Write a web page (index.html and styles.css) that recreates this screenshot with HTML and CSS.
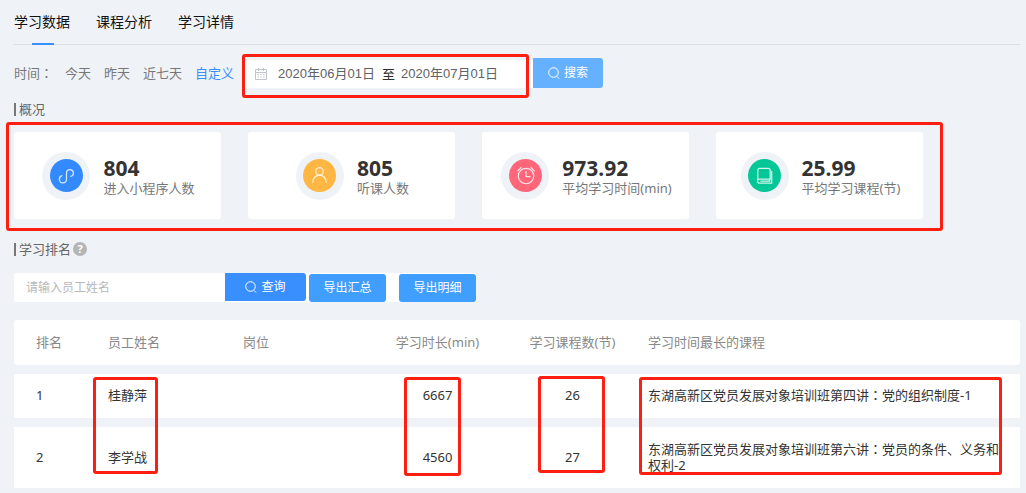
FILE: index.html
```
<!DOCTYPE html>
<html lang="zh-CN">
<head>
<meta charset="utf-8">
<title>学习数据</title>
<link rel="stylesheet" href="styles.css">
</head>
<body>
<nav class="tabs">
  <a class="tab tab-active" href="#data">学习数据</a>
  <a class="tab" href="#course">课程分析</a>
  <a class="tab" href="#detail">学习详情</a>
</nav>

<form class="filter">
  <span class="filter-label">时间<span class="colon" lang="zh-TW">：</span></span>
  <div class="ranges">
    <a class="range" href="#today">今天</a>
    <a class="range" href="#yesterday">昨天</a>
    <a class="range" href="#week">近七天</a>
    <a class="range range-active" href="#custom">自定义</a>
  </div>
  <div class="picker">
    <svg class="calendar" viewBox="0 0 12 12" fill="none" stroke="#c0c4cc"><path d="M.5 1.500h11v10H.5zM.5 4.500h11M3.500 0v3M8.500 0v3M2.500 6.500h1.500M5.200 6.500h1.500M8 6.500h1.500M2.500 9h1.500M5.200 9h1.500M8 9h1.500"/></svg>
    <input class="date" type="text" aria-label="开始日期" value="2020年06月01日">
    <span class="to">至</span>
    <input class="date" type="text" aria-label="结束日期" value="2020年07月01日">
    <span class="mark mark-date"></span>
  </div>
  <button class="btn btn-search" type="button">
    <svg class="lens" viewBox="0 0 12 12" fill="none" stroke="currentColor"><circle cx="5.500" cy="5.500" r="4.800"/><path d="M9 9.500l2 2"/></svg>搜索
  </button>
</form>

<h2 class="title">概况</h2>
<section class="stats">
  <article class="card">
    <span class="badge"><svg class="disc blue" viewBox="0 0 32 32"><path d="M11.500 16.200c-3.500 1.200-3.200 7 1 7 2.200 0 3.500-1.500 3.500-3.700v-6c0-2 1.400-3.300 3.300-3.300 4.200 0 4.600 5.800.9 6.600"/></svg></span>
    <div><strong class="num">804</strong><span class="cap">进入小程序人数</span></div>
  </article>
  <article class="card">
    <span class="badge"><svg class="disc orange" viewBox="0 0 32 32"><circle cx="16" cy="12" r="3.600"/><path d="M9.500 22.500c.3-9 12.700-9 13 0"/></svg></span>
    <div><strong class="num">805</strong><span class="cap">听课人数</span></div>
  </article>
  <article class="card">
    <span class="badge"><svg class="disc red" viewBox="0 0 32 32"><circle cx="16.500" cy="16.500" r="7.500"/><path d="M16.500 12v5h4M8.500 11.500l3-3M24.500 11.500l-3-3"/></svg></span>
    <div><strong class="num">973.92</strong><span class="cap">平均学习时间(min)</span></div>
  </article>
  <article class="card">
    <span class="badge"><svg class="disc green" viewBox="0 0 32 32"><path d="M21.500 19.500h-10c-3 0-3 4 0 4h11.500V12M9.500 21v-10c0-1.200.8-2 2-2h8c1.200 0 2 .8 2 2v8.500M12.500 21.500h8.500v-2"/></svg></span>
    <div><strong class="num">25.99</strong><span class="cap">平均学习课程(节)</span></div>
  </article>
  <span class="mark mark-stats"></span>
</section>

<h2 class="title">学习排名<span class="help">?</span></h2>
<form class="query">
  <input class="name" type="text" aria-label="员工姓名" placeholder="请输入员工姓名">
  <button class="btn btn-query" type="button">
    <svg class="lens" viewBox="0 0 12 12" fill="none" stroke="currentColor"><circle cx="5.500" cy="5.500" r="4.800"/><path d="M9 9.500l2 2"/></svg>查询
  </button>
  <button class="btn btn-export" type="button">导出汇总</button>
  <button class="btn btn-export btn-last" type="button">导出明细</button>
</form>

<div class="ranking">
  <table class="table">
    <colgroup><col class="c-rank"><col class="c-name"><col class="c-post"><col class="c-count"><col class="c-count"><col></colgroup>
    <thead>
      <tr><th>排名</th><th>员工姓名</th><th>岗位</th><th class="mid">学习时长(min)</th><th class="mid">学习课程数(节)</th><th class="course">学习时间最长的课程</th></tr>
    </thead>
    <tbody>
      <tr><td>1</td><td>桂静萍</td><td></td><td class="mid">6667</td><td class="mid">26</td><td class="course">东湖高新区党员发展对象培训班第四讲<span class="colon" lang="zh-TW">：</span>党的组织制度-1</td></tr>
      <tr><td>2</td><td>李学战</td><td></td><td class="mid">4560</td><td class="mid">27</td><td class="course">东湖高新区党员发展对象培训班第六讲<span class="colon" lang="zh-TW">：</span>党员的条件、义务和权利-2</td></tr>
    </tbody>
  </table>
  <span class="mark mark-name"></span>
  <span class="mark mark-time"></span>
  <span class="mark mark-count"></span>
  <span class="mark mark-course"></span>
</div>
</body>
</html>
```
FILE: styles.css
```
* { box-sizing: border-box; }
body {
  margin: 0;
  padding: 0 6px 0 14px;
  background: #eff3f8;
  color: #333;
  font: 13px/16px "Noto Sans", "Noto Sans CJK SC", sans-serif;
}
a { color: inherit; text-decoration: none; }
input, button { font: inherit; border: 0; margin: 0; }
.colon { font-family: "Noto Sans CJK TC", sans-serif; line-height: 1; }

.tabs {
  display: flex;
  gap: 26px;
  height: 45px;
  border-bottom: 1px solid #dcdee2;
  color: #111;
  font-size: 14px;
  line-height: 44px;
}
.tab-active { position: relative; }
.tab-active::after {
  content: "";
  position: absolute;
  left: 18px;
  bottom: -1px;
  width: 22px;
  height: 2px;
  background: #3a8ffe;
}

.filter {
  display: flex;
  align-items: center;
  height: 30px;
  margin-top: 13px;
  color: #777;
}
.filter-label { margin-right: 12px; }
.ranges { display: flex; gap: 13px; }
.range-active { color: #3a8ffe; }
.picker {
  position: relative;
  display: flex;
  align-items: center;
  align-self: flex-end;
  width: 290px;
  height: 28px;
  margin-left: 9px;
  padding-left: 12px;
  background: #fff;
}
.calendar { width: 12px; height: 12px; margin-right: 11px; }
.date {
  width: 104px;
  padding: 0;
  background: none;
  color: #606266;
  font-family: "Liberation Sans", "Noto Sans CJK SC", sans-serif;
}
.to { width: 19px; color: #303133; }

.btn {
  display: flex;
  align-items: center;
  justify-content: center;
  height: 28px;
  padding: 0;
  border-radius: 3px;
  background: #409eff;
  color: #fff;
  font-size: 12px;
}
.lens { width: 12px; height: 12px; margin-right: 4px; }
.btn-search {
  width: 70px;
  height: 30px;
  border-radius: 0 3px 3px 0;
  background: #66b1ff;
}

.title {
  display: flex;
  align-items: center;
  height: 16px;
  margin: 13px 0 15px;
  color: #666;
  font-size: 13px;
  font-weight: 400;
}
.title::before {
  content: "";
  width: 2px;
  height: 13px;
  margin-right: 3px;
  background: #777;
}
.help {
  width: 14px;
  height: 14px;
  margin-left: 2px;
  border-radius: 50%;
  background: #b5b5b5;
  color: #fff;
  font-size: 11px;
  font-weight: 700;
  line-height: 14px;
  text-align: center;
}

.stats {
  position: relative;
  display: grid;
  grid-template-columns: repeat(4, 1fr);
  gap: 27px;
  margin-right: 97px;
  margin-bottom: 22px;
}
.card {
  display: flex;
  align-items: center;
  justify-content: center;
  gap: 13px;
  height: 87px;
  padding-left: 2px;
  border-radius: 3px;
  background: #fff;
}
.badge {
  display: grid;
  place-items: center;
  width: 48px;
  height: 48px;
  border-radius: 50%;
  background: #eff3f8;
}
.disc {
  width: 33px;
  height: 33px;
  border-radius: 50%;
  fill: none;
  stroke: #fff;
  stroke-opacity: .8;
  stroke-width: 1.2;
  stroke-linecap: round;
}
.blue { background: #338aff; }
.orange { background: #ffb643; }
.red { background: #ff667a; }
.green { background: #04c797; }
.num { display: block; font-size: 21px; line-height: 24px; }
.cap { display: block; color: #777; }

.query {
  display: flex;
  align-items: flex-start;
  width: fit-content;
  margin: 16px 0 18px;
  border-radius: 3px;
  background: #fff;
}
.name {
  width: 211px;
  height: 29px;
  padding: 0 12px;
  border-radius: 3px 0 0 3px;
  background: #fff;
  font-size: 12px;
}
.name::placeholder { color: #b8b8b8; }
.btn-query {
  width: 81px;
  margin-right: 3px;
  border-radius: 0 3px 3px 0;
  background: #3a8ffe;
}
.btn-export { width: 77px; margin-top: 1px; }
.btn-last { margin-left: 13px; }

.ranking { position: relative; display: flow-root; }
.table {
  width: 100%;
  table-layout: fixed;
  border-spacing: 0 9px;
  margin: -9px 0;
}
.c-rank { width: 72px; }
.c-name { width: 135px; }
.c-post { width: 149px; }
.c-count { width: 135px; }
th, td {
  height: 44px;
  padding: 0 0 2px 22px;
  background: #fff;
  text-align: left;
}
th { height: 45px; color: #888; font-weight: 400; }
th:first-child { border-radius: 3px 0 0 3px; }
th:last-child { border-radius: 0 3px 3px 0; }
tbody tr:last-child td { height: 61px; }
.table .mid { padding: 0 0 2px; text-align: center; }
.table .course { padding: 0 14px 2px 8px; }

.mark {
  position: absolute;
  border: 3px solid #ff1e12;
  border-radius: 3px;
  pointer-events: none;
}
.mark-date { inset: -6px 4px -10px -1px; }
.mark-stats { inset: -10px -20px -12px -8px; }
.mark-name { left: 79px; top: 57px; width: 65px; height: 97px; }
.mark-time { left: 390px; top: 57px; width: 57px; height: 99px; }
.mark-count { left: 524px; top: 56px; width: 67px; height: 97px; }
.mark-course { left: 625px; right: 18px; top: 57px; height: 98px; }
```
